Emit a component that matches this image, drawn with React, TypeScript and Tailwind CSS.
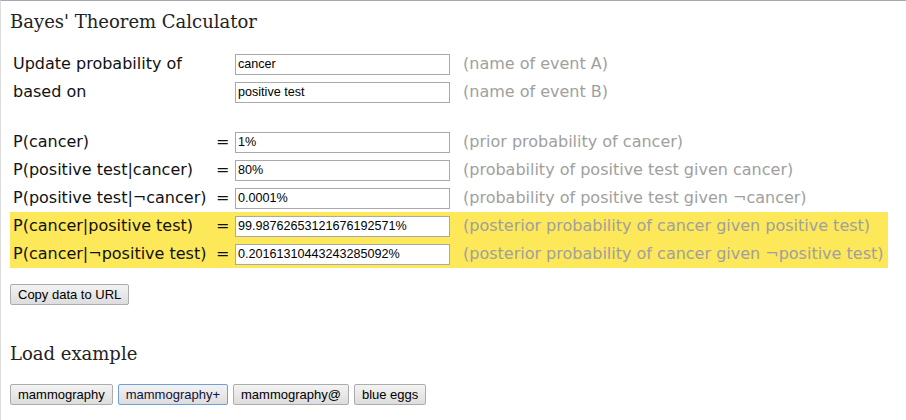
import React from "react";

const rows = [
  { label: "P(cancer)", value: "1%", desc: "(prior probability of cancer)", hl: false },
  { label: "P(positive test|cancer)", value: "80%", desc: "(probability of positive test given cancer)", hl: false },
  { label: "P(positive test|\u00accancer)", value: "0.0001%", desc: "(probability of positive test given \u00accancer)", hl: false },
  { label: "P(cancer|positive test)", value: "99.98762653121676192571%", desc: "(posterior probability of cancer given positive test)", hl: true },
  { label: "P(cancer|\u00acpositive test)", value: "0.20161310443243285092%", desc: "(posterior probability of cancer given \u00acpositive test)", hl: true },
];

function Input({ value }: { value: string }) {
  return (
    <div className="w-[215px] h-[21px] border border-[#a9a9a9] bg-white flex items-center pl-[2px] text-[12.6px] text-black [font-family:'Liberation_Sans',Arial,sans-serif] leading-none whitespace-nowrap overflow-hidden">
      {value}
    </div>
  );
}

function Btn({ children, focused }: { children: React.ReactNode; focused?: boolean }) {
  return (
    <div
      className={
        "h-[21px] px-[7px] flex items-center rounded-[2px] border text-[13px] leading-none [font-family:'Liberation_Sans',Arial,sans-serif] bg-gradient-to-b from-[#f3f3f3] to-[#dddddd] " +
        (focused ? "border-[#6f9fd8] text-[#101040]" : "border-[#acacac] text-black")
      }
    >
      {children}
    </div>
  );
}

export default function App() {
  const font = "[font-family:'DejaVu_Sans',Verdana,sans-serif]";
  return (
    <div className="w-[906px] h-[420px] bg-white border-t border-t-[#a8a8a8] border-l border-l-[#dcdcdc] overflow-hidden">
      <div className="pl-[9px]">
        <div className="pt-[7px] h-[40px] text-[18px] text-[#222] [font-family:'DejaVu_Serif',Georgia,serif]">
          Bayes' Theorem Calculator
        </div>
        <div className={"mt-[9px] w-[878px] text-[16px] text-[#111] " + font}>
          <div className="flex items-center h-[28px]">
            <div className="w-[225px] pl-[3px]">Update probability of</div>
            <Input value="cancer" />
            <div className="pl-[13px] text-[#a0a0a0]">(name of event A)</div>
          </div>
          <div className="flex items-center h-[28px]">
            <div className="w-[225px] pl-[3px]">based on</div>
            <Input value="positive test" />
            <div className="pl-[13px] text-[#a0a0a0]">(name of event B)</div>
          </div>
          <div className="h-[22px]" />
          {rows.map((r) => (
            <div key={r.label} className={"flex items-center h-[28px] " + (r.hl ? "bg-[#fde85a]" : "")}>
              <div className="w-[206px] pl-[3px] whitespace-nowrap">{r.label}</div>
              <div className="w-[19px]">=</div>
              <Input value={r.value} />
              <div className="pl-[13px] text-[#a0a0a0] whitespace-nowrap">{r.desc}</div>
            </div>
          ))}
        </div>
        <div className="mt-[16px] flex">
          <Btn>Copy data to URL</Btn>
        </div>
        <div className="mt-[35px] text-[18px] text-[#222] [font-family:'DejaVu_Serif',Georgia,serif]">Load example</div>
        <div className="mt-[17px] flex gap-[5px]">
          <Btn>mammography</Btn>
          <Btn focused>mammography+</Btn>
          <Btn>mammography@</Btn>
          <Btn>blue eggs</Btn>
        </div>
      </div>
    </div>
  );
}
